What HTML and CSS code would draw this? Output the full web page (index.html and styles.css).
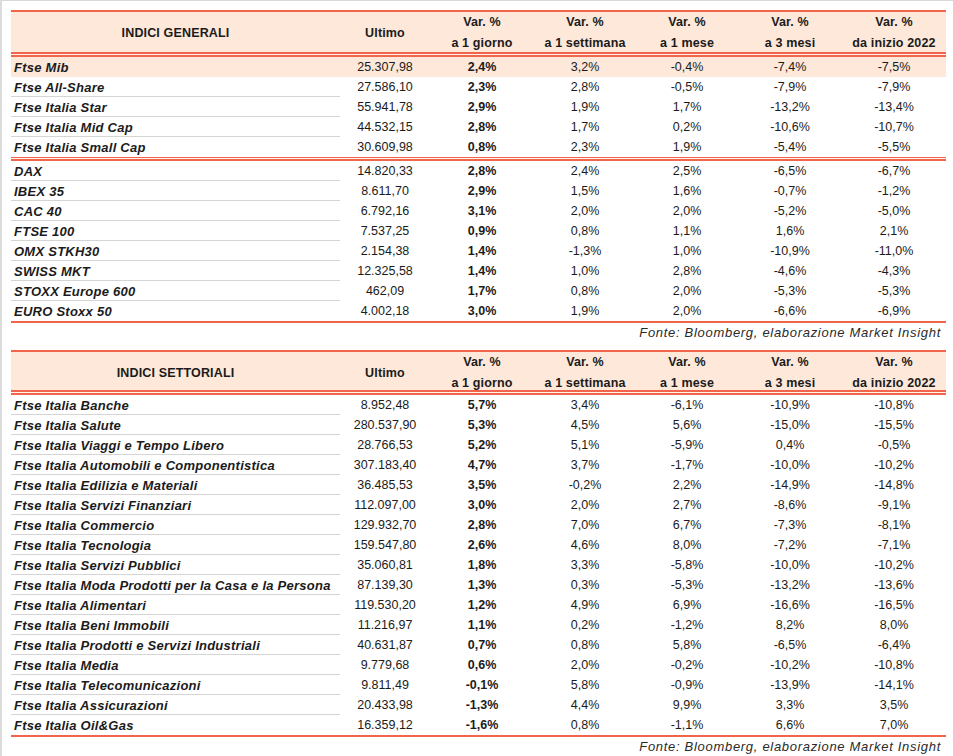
FILE: index.html
```html
<!DOCTYPE html>
<html lang="it">
<head>
<meta charset="utf-8">
<title>Indici</title>
<link rel="stylesheet" href="styles.css">
</head>
<body>
<div class="page">
  <section class="tbl">
    <div class="head h40">
      <div class="hname">INDICI GENERALI</div>
      <div class="hcell">Ultimo</div>
      <div class="hcell">Var. %<br>a 1 giorno</div>
      <div class="hcell">Var. %<br>a 1 settimana</div>
      <div class="hcell">Var. %<br>a 1 mese</div>
      <div class="hcell">Var. %<br>a 3 mesi</div>
      <div class="hcell">Var. %<br>da inizio 2022</div>
    </div>
    <div class="dbl"></div>
    <div class="group">
      <div class="row hl nosep"><div class="name">Ftse Mib</div><div>25.307,98</div><div class="b">2,4%</div><div>3,2%</div><div>-0,4%</div><div>-7,4%</div><div>-7,5%</div></div>
      <div class="row"><div class="name">Ftse All-Share</div><div>27.586,10</div><div class="b">2,3%</div><div>2,8%</div><div>-0,5%</div><div>-7,9%</div><div>-7,9%</div></div>
      <div class="row"><div class="name">Ftse Italia Star</div><div>55.941,78</div><div class="b">2,9%</div><div>1,9%</div><div>1,7%</div><div>-13,2%</div><div>-13,4%</div></div>
      <div class="row"><div class="name">Ftse Italia Mid Cap</div><div>44.532,15</div><div class="b">2,8%</div><div>1,7%</div><div>0,2%</div><div>-10,6%</div><div>-10,7%</div></div>
      <div class="row nosep"><div class="name">Ftse Italia Small Cap</div><div>30.609,98</div><div class="b">0,8%</div><div>2,3%</div><div>1,9%</div><div>-5,4%</div><div>-5,5%</div></div>
    </div>
    <div class="dbl d4"></div>
    <div class="group">
      <div class="row"><div class="name">DAX</div><div>14.820,33</div><div class="b">2,8%</div><div>2,4%</div><div>2,5%</div><div>-6,5%</div><div>-6,7%</div></div>
      <div class="row"><div class="name">IBEX 35</div><div>8.611,70</div><div class="b">2,9%</div><div>1,5%</div><div>1,6%</div><div>-0,7%</div><div>-1,2%</div></div>
      <div class="row"><div class="name">CAC 40</div><div>6.792,16</div><div class="b">3,1%</div><div>2,0%</div><div>2,0%</div><div>-5,2%</div><div>-5,0%</div></div>
      <div class="row"><div class="name">FTSE 100</div><div>7.537,25</div><div class="b">0,9%</div><div>0,8%</div><div>1,1%</div><div>1,6%</div><div>2,1%</div></div>
      <div class="row"><div class="name">OMX STKH30</div><div>2.154,38</div><div class="b">1,4%</div><div>-1,3%</div><div>1,0%</div><div>-10,9%</div><div>-11,0%</div></div>
      <div class="row"><div class="name">SWISS MKT</div><div>12.325,58</div><div class="b">1,4%</div><div>1,0%</div><div>2,8%</div><div>-4,6%</div><div>-4,3%</div></div>
      <div class="row"><div class="name">STOXX Europe 600</div><div>462,09</div><div class="b">1,7%</div><div>0,8%</div><div>2,0%</div><div>-5,3%</div><div>-5,3%</div></div>
      <div class="row nosep"><div class="name">EURO Stoxx 50</div><div>4.002,18</div><div class="b">3,0%</div><div>1,9%</div><div>2,0%</div><div>-6,6%</div><div>-6,9%</div></div>
    </div>
    <div class="bottom"></div>
    <div class="fonte f1">Fonte: Bloomberg, elaborazione Market Insight</div>
  </section>

  <section class="tbl">
    <div class="head h38">
      <div class="hname">INDICI SETTORIALI</div>
      <div class="hcell">Ultimo</div>
      <div class="hcell">Var. %<br>a 1 giorno</div>
      <div class="hcell">Var. %<br>a 1 settimana</div>
      <div class="hcell">Var. %<br>a 1 mese</div>
      <div class="hcell">Var. %<br>a 3 mesi</div>
      <div class="hcell">Var. %<br>da inizio 2022</div>
    </div>
    <div class="dbl"></div>
    <div class="group">
      <div class="row"><div class="name">Ftse Italia Banche</div><div>8.952,48</div><div class="b">5,7%</div><div>3,4%</div><div>-6,1%</div><div>-10,9%</div><div>-10,8%</div></div>
      <div class="row"><div class="name">Ftse Italia Salute</div><div>280.537,90</div><div class="b">5,3%</div><div>4,5%</div><div>5,6%</div><div>-15,0%</div><div>-15,5%</div></div>
      <div class="row"><div class="name">Ftse Italia Viaggi e Tempo Libero</div><div>28.766,53</div><div class="b">5,2%</div><div>5,1%</div><div>-5,9%</div><div>0,4%</div><div>-0,5%</div></div>
      <div class="row"><div class="name">Ftse Italia Automobili e Componentistica</div><div>307.183,40</div><div class="b">4,7%</div><div>3,7%</div><div>-1,7%</div><div>-10,0%</div><div>-10,2%</div></div>
      <div class="row"><div class="name">Ftse Italia Edilizia e Materiali</div><div>36.485,53</div><div class="b">3,5%</div><div>-0,2%</div><div>2,2%</div><div>-14,9%</div><div>-14,8%</div></div>
      <div class="row"><div class="name">Ftse Italia Servizi Finanziari</div><div>112.097,00</div><div class="b">3,0%</div><div>2,0%</div><div>2,7%</div><div>-8,6%</div><div>-9,1%</div></div>
      <div class="row"><div class="name">Ftse Italia Commercio</div><div>129.932,70</div><div class="b">2,8%</div><div>7,0%</div><div>6,7%</div><div>-7,3%</div><div>-8,1%</div></div>
      <div class="row"><div class="name">Ftse Italia Tecnologia</div><div>159.547,80</div><div class="b">2,6%</div><div>4,6%</div><div>8,0%</div><div>-7,2%</div><div>-7,1%</div></div>
      <div class="row"><div class="name">Ftse Italia Servizi Pubblici</div><div>35.060,81</div><div class="b">1,8%</div><div>3,3%</div><div>-5,8%</div><div>-10,0%</div><div>-10,2%</div></div>
      <div class="row"><div class="name">Ftse Italia Moda Prodotti per la Casa e la Persona</div><div>87.139,30</div><div class="b">1,3%</div><div>0,3%</div><div>-5,3%</div><div>-13,2%</div><div>-13,6%</div></div>
      <div class="row"><div class="name">Ftse Italia Alimentari</div><div>119.530,20</div><div class="b">1,2%</div><div>4,9%</div><div>6,9%</div><div>-16,6%</div><div>-16,5%</div></div>
      <div class="row"><div class="name">Ftse Italia Beni Immobili</div><div>11.216,97</div><div class="b">1,1%</div><div>0,2%</div><div>-1,2%</div><div>8,2%</div><div>8,0%</div></div>
      <div class="row"><div class="name">Ftse Italia Prodotti e Servizi Industriali</div><div>40.631,87</div><div class="b">0,7%</div><div>0,8%</div><div>5,8%</div><div>-6,5%</div><div>-6,4%</div></div>
      <div class="row"><div class="name">Ftse Italia Media</div><div>9.779,68</div><div class="b">0,6%</div><div>2,0%</div><div>-0,2%</div><div>-10,2%</div><div>-10,8%</div></div>
      <div class="row"><div class="name">Ftse Italia Telecomunicazioni</div><div>9.811,49</div><div class="b">-0,1%</div><div>5,8%</div><div>-0,9%</div><div>-13,9%</div><div>-14,1%</div></div>
      <div class="row"><div class="name">Ftse Italia Assicurazioni</div><div>20.433,98</div><div class="b">-1,3%</div><div>4,4%</div><div>9,9%</div><div>3,3%</div><div>3,5%</div></div>
      <div class="row nosep"><div class="name">Ftse Italia Oil&amp;Gas</div><div>16.359,12</div><div class="b">-1,6%</div><div>0,8%</div><div>-1,1%</div><div>6,6%</div><div>7,0%</div></div>
    </div>
    <div class="bottom"></div>
    <div class="fonte f2">Fonte: Bloomberg, elaborazione Market Insight</div>
  </section>
</div>
</body>
</html>
```

FILE: styles.css
```css
* { box-sizing: border-box; }
html, body { margin: 0; padding: 0; background: #fff; }
body {
  font-family: "Liberation Sans", Arial, sans-serif;
  color: #1b1b1b;
  width: 953px;
  height: 756px;
  overflow: hidden;
}
.page {
  height: 756px;
  border-top: 1px solid #d9d9d9;
  border-left: 2px solid #dcdcdc;
  padding: 9px 7px 0 9px;
}
.tbl { width: 935px; }
.head {
  display: grid;
  grid-template-columns: 329px 90px 104px 102px 102px 104px 104px;
  align-items: center;
  background: #fde8da;
  border-top: 2px solid #f2654d;
  font-weight: bold;
  font-size: 12.5px;
  text-align: center;
  letter-spacing: 0.15px;
}
.h40 { height: 42px; }
.h38 { height: 40px; }
.hcell { line-height: 21px; }
.hname { line-height: 21px; }
.dbl {
  height: 5px;
  border-top: 2px solid #f2654d;
  border-bottom: 2px solid #f2654d;
  background: #fff3ec;
}
.d4 { height: 4px; border-top-width: 1.5px; }
.row {
  display: grid;
  grid-template-columns: 329px 90px 104px 102px 102px 104px 104px;
  height: 20px;
  font-size: 12.5px;
  text-align: center;
  line-height: 21px;
}
.row > div { height: 20px; }
.row .name {
  text-align: left;
  padding-left: 3px;
  font-weight: bold;
  font-style: italic;
  font-size: 13px;
  letter-spacing: 0.25px;
  border-bottom: 1px solid #d5d5d5;
  white-space: nowrap;
}
.row.nosep .name { border-bottom: 0; }
.row .b { font-weight: bold; }
.row.hl { background: #fde8da; }
.bottom { height: 2px; background: #f2654d; }
.fonte {
  text-align: right;
  font-style: italic;
  font-size: 13px;
  color: #2a2a2a;
  padding-right: 5px;
  letter-spacing: 0.7px;
}
.f1 { height: 27px; line-height: 19px; }
.f2 { height: 22px; line-height: 20px; }
```
